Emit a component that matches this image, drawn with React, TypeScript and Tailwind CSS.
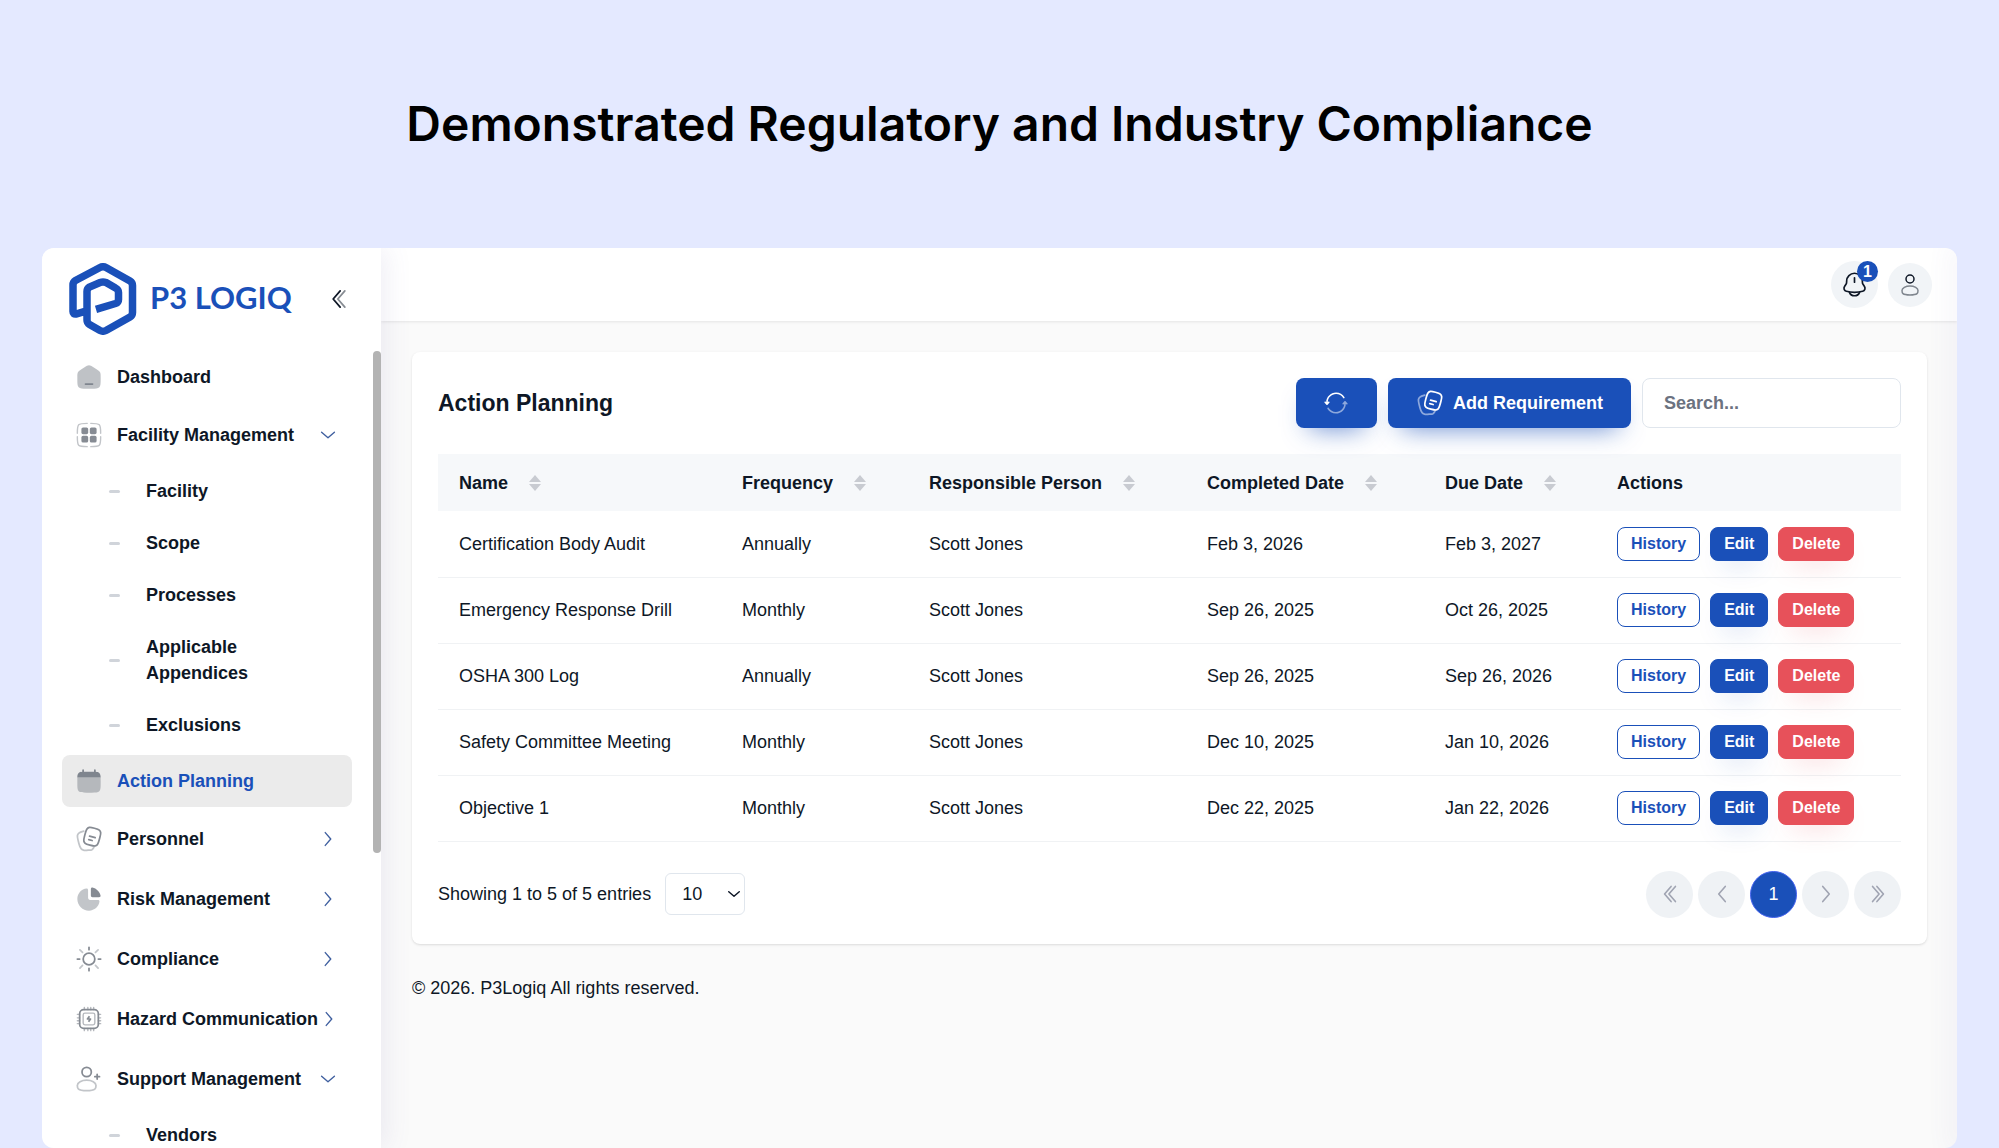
import React, { useState } from 'react';

const brandFont = 'font-[Lato,sans-serif]';

interface IconProps {
  className?: string;
}

const DashboardIcon: React.FC<IconProps> = ({ className }) => (
  <svg className={className} viewBox="0 0 24 24" fill="none" aria-hidden="true">
    <path
      opacity="0.5"
      d="M2 12.2039C2 9.91549 2 8.77128 2.5192 7.82274C3.0384 6.87421 3.98695 6.28551 5.88403 5.10813L7.88403 3.86687C9.88939 2.62229 10.8921 2 12 2C13.1079 2 14.1106 2.62229 16.116 3.86687L18.116 5.10812C20.0131 6.28551 20.9616 6.87421 21.4808 7.82274C22 8.77128 22 9.91549 22 12.2039V13.725C22 17.6258 22 19.5763 20.8284 20.7881C19.6569 22 17.7712 22 14 22H10C6.22876 22 4.34315 22 3.17157 20.7881C2 19.5763 2 17.6258 2 13.725V12.2039Z"
      fill="currentColor"
    />
    <path d="M9 18H15" stroke="currentColor" strokeWidth="1.5" strokeLinecap="round" />
  </svg>
);

const FacilityIcon: React.FC<IconProps> = ({ className }) => (
  <svg className={className} viewBox="0 0 24 24" fill="none" aria-hidden="true">
    <g fill="currentColor">
      <rect x="5.5" y="5.5" width="5.8" height="5.8" rx="1.4" />
      <rect x="12.7" y="5.5" width="5.8" height="5.8" rx="1.4" />
      <rect x="5.5" y="12.7" width="5.8" height="5.8" rx="1.4" />
      <rect x="12.7" y="12.7" width="5.8" height="5.8" rx="1.4" />
    </g>
    <g opacity="0.5" stroke="currentColor" strokeWidth="1.2" strokeLinecap="round">
      <path d="M22 13.5C22 17.771 22 19.657 20.828 20.828C19.657 22 17.771 22 13.5 22" />
      <path d="M10.5 22C6.229 22 4.343 22 3.172 20.828C2 19.657 2 17.771 2 13.5" />
      <path d="M10.5 2C6.229 2 4.343 2 3.172 3.172C2 4.343 2 6.229 2 10.5" />
      <path d="M13.5 2C17.771 2 19.657 2 20.828 3.172C22 4.343 22 6.229 22 10.5" />
    </g>
  </svg>
);

const CalendarIcon: React.FC<IconProps> = ({ className }) => (
  <svg className={className} viewBox="0 0 24 24" fill="none" aria-hidden="true">
    <path
      d="M6.96 2C7.37 2 7.7 2.32 7.7 2.72V4.08C8.36 4.07 9.1 4.07 9.94 4.07H14.06C14.9 4.07 15.64 4.07 16.3 4.08V2.72C16.3 2.32 16.63 2 17.04 2C17.45 2 17.79 2.32 17.79 2.72V4.14C19.21 4.25 20.15 4.53 20.83 5.2C21.52 5.87 21.82 6.77 21.93 8.15L22 9H2V8.15C2.11 6.77 2.41 5.87 3.1 5.2C3.78 4.53 4.72 4.25 6.21 4.14V2.72C6.21 2.32 6.55 2 6.96 2Z"
      fill="currentColor"
    />
    <path
      opacity="0.5"
      d="M22 14V12C22 11.16 21.99 9.67 21.97 9H2.03C2.01 9.67 2.01 11.16 2.01 12V14C2.01 17.77 2.01 19.66 3.18 20.83C4.35 22 6.24 22 10 22H14C17.77 22 19.65 22 20.82 20.83C22 19.66 22 17.77 22 14Z"
      fill="currentColor"
    />
  </svg>
);

const NotesIcon: React.FC<IconProps> = ({ className }) => (
  <svg className={className} viewBox="0 0 24 24" fill="none" aria-hidden="true">
    <path
      d="M20.3116 12.6473L19.7939 14.5791C19.1895 16.8346 18.8873 17.9624 18.2021 18.6938C17.6611 19.2714 16.9604 19.6759 16.1887 19.8563C15.2115 20.0847 14.0837 19.7825 11.8281 19.1782C9.57254 18.5738 8.44476 18.2716 7.71336 17.5864C7.13574 17.0453 6.73122 16.3447 6.55086 15.5729C6.3224 14.5957 6.62459 13.4679 7.22898 11.2124L7.74661 9.28055C8.351 7.02499 8.65319 5.89721 9.33842 5.1658C9.87948 4.58818 10.5801 4.18367 11.3519 4.0033C12.3291 3.77484 13.4569 4.07704 15.7124 4.68143C17.968 5.28581 19.0958 5.58801 19.8272 6.27324C20.4048 6.81431 20.8093 7.51492 20.9897 8.28667C21.2181 9.26386 20.916 10.3917 20.3116 12.6473Z"
      transform="translate(1 -1.9)"
      stroke="currentColor"
      strokeWidth="1.5"
    />
    <path d="M12.5 9.6L17.3 10.9" stroke="currentColor" strokeWidth="1.5" strokeLinecap="round" />
    <path d="M11.8 12.5L14.7 13.3" stroke="currentColor" strokeWidth="1.5" strokeLinecap="round" />
    <path
      opacity="0.5"
      d="M16.6 18.2C16 20 15.3 20.7 14.5 21.2C13.8 21.6 13 21.8 11.3 21.5C9.5 21.9 8.4 22 7.3 21.6C6.4 21.3 5.6 20.8 5.1 20.1C4.4 19.3 4 18.2 3.4 16L2.7 13.4C2.1 11.1 1.9 10 2.1 9C2.3 8.2 2.7 7.5 3.3 7C4.1 6.3 5.3 5.9 7.5 5.3"
      stroke="currentColor"
      strokeWidth="1.5"
      strokeLinecap="round"
    />
  </svg>
);

const PieIcon: React.FC<IconProps> = ({ className }) => (
  <svg className={className} viewBox="0 0 24 24" fill="none" aria-hidden="true">
    <path
      opacity="0.5"
      d="M10 3C10.7 3 11.2 3.5 11.2 4.3V11C11.2 12.1 11.9 12.8 13 12.8H19.7C20.5 12.8 21 13.3 21 14C20.5 18.5 16.7 22 12 22C6.5 22 2 17.5 2 12C2 7.3 5.5 3.4 10 3Z"
      fill="currentColor"
    />
    <path
      d="M13.6 3.4C13.6 2.5 14.2 1.9 15 2.1C18.4 2.9 21.1 5.6 21.9 9C22.1 9.8 21.5 10.4 20.6 10.4H15C14.2 10.4 13.6 9.8 13.6 9V3.4Z"
      fill="currentColor"
    />
  </svg>
);

const SunIcon: React.FC<IconProps> = ({ className }) => (
  <svg className={className} viewBox="0 0 24 24" fill="none" aria-hidden="true">
    <circle cx="12" cy="12" r="5" stroke="currentColor" strokeWidth="1.5" />
    <path
      d="M12 2V4M12 20V22M4 12H2M22 12H20"
      stroke="currentColor"
      strokeWidth="1.5"
      strokeLinecap="round"
    />
    <path
      opacity="0.5"
      d="M19.778 4.223L17.556 6.254M4.222 4.223L6.444 6.254M6.444 17.556L4.222 19.778M19.778 19.777L17.556 17.555"
      stroke="currentColor"
      strokeWidth="1.5"
      strokeLinecap="round"
    />
  </svg>
);

const ChipIcon: React.FC<IconProps> = ({ className }) => (
  <svg className={className} viewBox="0 0 24 24" fill="none" aria-hidden="true">
    <rect x="4" y="4" width="16" height="16" rx="3.5" stroke="currentColor" strokeWidth="1.5" />
    <rect x="7" y="7" width="10" height="10" rx="1.5" opacity="0.6" stroke="currentColor" strokeWidth="1.2" />
    <path d="M12.4 9.6L10.7 12H13.3L11.6 14.4" stroke="currentColor" strokeWidth="1.5" strokeLinejoin="round" />
    <path
      opacity="0.6"
      d="M8 4V2M11 4V2M13.5 4V2M16 4V2M8 20V22M11 20V22M13.5 20V22M16 20V22M4 8H2M4 11H2M4 13.5H2M4 16H2M20 8H22M20 11H22M20 13.5H22M20 16H22"
      stroke="currentColor"
      strokeWidth="1.2"
      strokeLinecap="round"
    />
  </svg>
);

const UserPlusIcon: React.FC<IconProps> = ({ className }) => (
  <svg className={className} viewBox="0 0 24 24" fill="none" aria-hidden="true">
    <circle cx="10" cy="6" r="4" stroke="currentColor" strokeWidth="1.5" />
    <path d="M21 10H19M19 10H17M19 10V8M19 10V12" stroke="currentColor" strokeWidth="1.5" strokeLinecap="round" />
    <path
      opacity="0.5"
      d="M18 17.5C18 19.985 18 22 10 22C2 22 2 19.985 2 17.5C2 15.015 5.582 13 10 13C14.418 13 18 15.015 18 17.5Z"
      stroke="currentColor"
      strokeWidth="1.5"
    />
  </svg>
);

const UserIcon: React.FC<IconProps> = ({ className }) => (
  <svg className={className} viewBox="0 0 24 24" fill="none" aria-hidden="true">
    <circle cx="12" cy="6" r="4" stroke="currentColor" strokeWidth="1.5" />
    <path
      opacity="0.5"
      d="M20 17.5C20 19.985 20 22 12 22C4 22 4 19.985 4 17.5C4 15.015 7.582 13 12 13C16.418 13 20 15.015 20 17.5Z"
      stroke="currentColor"
      strokeWidth="1.5"
    />
  </svg>
);

const BellIcon: React.FC<IconProps> = ({ className }) => (
  <svg className={className} viewBox="0 0 24 24" fill="none" aria-hidden="true">
    <path
      d="M19.0001 9.7041V9C19.0001 5.13401 15.8661 2 12.0001 2C8.13407 2 5.00006 5.13401 5.00006 9V9.7041C5.00006 10.5491 4.74995 11.3752 4.28123 12.0783L3.13263 13.8012C2.08349 15.3749 2.88442 17.5139 4.70913 18.0116C9.48258 19.3134 14.5175 19.3134 19.291 18.0116C21.1157 17.5139 21.9166 15.3749 20.8675 13.8012L19.7189 12.0783C19.2502 11.3752 19.0001 10.5491 19.0001 9.7041Z"
      stroke="currentColor"
      strokeWidth="1.5"
    />
    <path
      d="M7.5 19C8.15503 20.7478 9.92246 22 12 22C14.0775 22 15.845 20.7478 16.5 19"
      stroke="currentColor"
      strokeWidth="1.5"
      strokeLinecap="round"
    />
    <path d="M12 6V10" stroke="currentColor" strokeWidth="1.5" strokeLinecap="round" />
  </svg>
);

const RefreshIcon: React.FC<IconProps> = ({ className }) => (
  <svg className={className} viewBox="0 0 24 24" fill="none" aria-hidden="true">
    <path
      d="M12.0789 3V2.25V3ZM3.67981 11.3333H2.92981H3.67981ZM3.67981 13L3.15157 13.5324C3.44398 13.8225 3.91565 13.8225 4.20805 13.5324L3.67981 13ZM5.88787 11.8656C6.18191 11.5738 6.18377 11.0989 5.89203 10.8049C5.60029 10.5109 5.12542 10.509 4.83138 10.8007L5.88787 11.8656ZM2.52824 10.8007C2.2342 10.509 1.75933 10.5109 1.46759 10.8049C1.17585 11.0989 1.17772 11.5738 1.47176 11.8656L2.52824 10.8007ZM18.6156 7.39279C18.8325 7.74565 19.2944 7.85585 19.6473 7.63892C20.0001 7.42199 20.1103 6.96007 19.8934 6.60721L18.6156 7.39279ZM12.0789 2.25C7.03155 2.25 2.92981 6.3112 2.92981 11.3333H4.42981C4.42981 7.15072 7.84884 3.75 12.0789 3.75V2.25ZM2.92981 11.3333L2.92981 13H4.42981L4.42981 11.3333H2.92981ZM4.20805 13.5324L5.88787 11.8656L4.83138 10.8007L3.15157 12.4676L4.20805 13.5324ZM4.20805 12.4676L2.52824 10.8007L1.47176 11.8656L3.15157 13.5324L4.20805 12.4676ZM19.8934 6.60721C18.287 3.99427 15.3873 2.25 12.0789 2.25V3.75C14.8484 3.75 17.2727 5.20845 18.6156 7.39279L19.8934 6.60721Z"
      fill="currentColor"
    />
    <path
      opacity="0.5"
      d="M11.8825 21V21.75V21ZM20.3137 12.6667H21.0637H20.3137ZM20.3137 11L20.8409 10.4666C20.5487 10.1778 20.0786 10.1778 19.7864 10.4666L20.3137 11ZM18.1002 12.1333C17.8056 12.4244 17.8028 12.8993 18.094 13.1939C18.3852 13.4885 18.86 13.4913 19.1546 13.2001L18.1002 12.1333ZM21.4727 13.2001C21.7673 13.4913 22.2421 13.4885 22.5333 13.1939C22.8245 12.8993 22.8217 12.4244 22.5271 12.1332L21.4727 13.2001ZM5.31769 16.6061C5.10016 16.2536 4.63806 16.1442 4.28557 16.3618C3.93307 16.5793 3.82366 17.0414 4.0412 17.3939L5.31769 16.6061ZM11.8825 21.75C16.9448 21.75 21.0637 17.6915 21.0637 12.6667H19.5637C19.5637 16.8466 16.133 20.25 11.8825 20.25V21.75ZM21.0637 12.6667V11H19.5637V12.6667H21.0637ZM19.7864 10.4666L18.1002 12.1333L19.1546 13.2001L20.8409 11.5334L19.7864 10.4666ZM19.7864 11.5334L21.4727 13.2001L22.5271 12.1332L20.8409 10.4666L19.7864 11.5334ZM4.0412 17.3939C5.65381 20.0069 8.56379 21.75 11.8825 21.75V20.25C9.09999 20.25 6.6656 18.7903 5.31769 16.6061L4.0412 17.3939Z"
      fill="currentColor"
    />
  </svg>
);

const CollapseIcon: React.FC<IconProps> = ({ className }) => (
  <svg className={className} viewBox="0 0 24 24" fill="none" aria-hidden="true">
    <path d="M13 19L7 12L13 5" stroke="currentColor" strokeWidth="1.5" strokeLinecap="round" strokeLinejoin="round" />
    <path opacity="0.5" d="M17 19L11 12L17 5" stroke="currentColor" strokeWidth="1.5" strokeLinecap="round" strokeLinejoin="round" />
  </svg>
);

interface ChevronProps extends IconProps {
  d: string;
  width?: number;
}

const Chevron: React.FC<ChevronProps> = ({ d, width = 1.5, className }) => (
  <svg className={className} viewBox="0 0 24 24" fill="none" aria-hidden="true">
    <path d={d} stroke="currentColor" strokeWidth={width} strokeLinecap="round" strokeLinejoin="round" />
  </svg>
);

const CHEVRON_DOWN = 'M19 9L12 15L5 9';
const CHEVRON_RIGHT = 'M9 5L15 12L9 19';

const Logo: React.FC<IconProps> = ({ className }) => (
  <svg className={className} viewBox="0 0 68 72" fill="none" aria-hidden="true">
    <path
      d="M17.5 47.8L7 51Q4 51.5 4 48.5V22Q4 19 6.5 17.5L31 4.5Q34 3 37 4.5L61 18Q63.5 19.5 63.5 22.5V49.5Q63.5 52.5 61 54L37 67.5Q34 69 31 67.5L20.5 61.5Q18 60 18 57V28.5Q18 25.5 20.5 24L31 19.5Q34 18.5 37 19.5L46.5 25Q49.5 26.5 49.5 29.5V36.5Q49.5 39.5 46.5 40.5L27 46.3"
      stroke="#1a50b9"
      strokeWidth="7.5"
    />
  </svg>
);

interface NavItem {
  label: string;
  icon: React.FC<IconProps>;
  state?: 'open' | 'closed';
  active?: boolean;
  children?: string[];
}

const navItems: NavItem[] = [
  { label: 'Dashboard', icon: DashboardIcon },
  {
    label: 'Facility Management',
    icon: FacilityIcon,
    state: 'open',
    children: ['Facility', 'Scope', 'Processes', 'Applicable Appendices', 'Exclusions'],
  },
  { label: 'Action Planning', icon: CalendarIcon, active: true },
  { label: 'Personnel', icon: NotesIcon, state: 'closed' },
  { label: 'Risk Management', icon: PieIcon, state: 'closed' },
  { label: 'Compliance', icon: SunIcon, state: 'closed' },
  { label: 'Hazard Communication', icon: ChipIcon, state: 'closed' },
  { label: 'Support Management', icon: UserPlusIcon, state: 'open', children: ['Vendors'] },
];

const columns = [
  { label: 'Name', width: 'w-[283px]', sortable: true },
  { label: 'Frequency', width: 'w-[187px]', sortable: true },
  { label: 'Responsible Person', width: 'w-[278px]', sortable: true },
  { label: 'Completed Date', width: 'w-[238px]', sortable: true },
  { label: 'Due Date', width: 'w-[172px]', sortable: true },
  { label: 'Actions', width: '', sortable: false },
];

const requirements = [
  { name: 'Certification Body Audit', frequency: 'Annually', person: 'Scott Jones', completed: 'Feb 3, 2026', due: 'Feb 3, 2027' },
  { name: 'Emergency Response Drill', frequency: 'Monthly', person: 'Scott Jones', completed: 'Sep 26, 2025', due: 'Oct 26, 2025' },
  { name: 'OSHA 300 Log', frequency: 'Annually', person: 'Scott Jones', completed: 'Sep 26, 2025', due: 'Sep 26, 2026' },
  { name: 'Safety Committee Meeting', frequency: 'Monthly', person: 'Scott Jones', completed: 'Dec 10, 2025', due: 'Jan 10, 2026' },
  { name: 'Objective 1', frequency: 'Monthly', person: 'Scott Jones', completed: 'Dec 22, 2025', due: 'Jan 22, 2026' },
];

const Sidebar: React.FC = () => (
  <aside className="z-10 flex w-[339px] shrink-0 flex-col bg-white shadow-[5px_0_25px_0_rgba(94,92,154,0.1)]">
    <div className="flex h-[103px] shrink-0 items-center justify-between pb-0.5 pl-[27px] pr-7">
      <a href="#" className="flex items-center gap-[13px] text-[#1a50b9]">
        <Logo className="h-[72px] w-[68px]" />
        <span className={`pb-1 text-[31px] leading-9 font-bold ${brandFont}`}>P3 LOGIQ</span>
      </a>
      <button type="button" aria-label="Collapse sidebar">
        <CollapseIcon className="size-7" />
      </button>
    </div>

    {/* menu */}
    <div className="flex min-h-0 flex-1 overflow-hidden">
      <nav className="min-w-0 flex-1 pl-5 pr-[21px]">
        <ul className="flex flex-col gap-1 font-bold">
          {navItems.map(item => (
            <li key={item.label}>
              {item.state ? (
                <button type="button" className="flex h-14 w-full items-center justify-between px-[13px]">
                  <span className="flex items-center gap-3.5 whitespace-nowrap">
                    <item.icon className="size-7 shrink-0 text-[#868b93]" />
                    {item.label}
                  </span>
                  <Chevron
                    d={item.state === 'open' ? CHEVRON_DOWN : CHEVRON_RIGHT}
                    className="size-[22px] shrink-0 text-[#3f5f9f]"
                  />
                </button>
              ) : (
                <a
                  href="#"
                  className={`flex h-[52px] items-center gap-3.5 rounded-lg px-[13px] ${item.active ? 'bg-[#ebebeb] text-[#1a50b9]' : ''}`}
                >
                  <item.icon className="size-7 shrink-0 text-[#7f858e]" />
                  {item.label}
                </a>
              )}
              {item.children && (
                <ul className="mt-0.5">
                  {item.children.map(child => (
                    <li key={child}>
                      <a href="#" className="flex items-center gap-[26px] py-[13px] pl-[47px] pr-6">
                        <span className="h-[3px] w-[11px] shrink-0 rounded-sm bg-[#d0d4da]" />
                        {child}
                      </a>
                    </li>
                  ))}
                </ul>
              )}
            </li>
          ))}
        </ul>
      </nav>
      <div className="h-[502px] w-2 shrink-0 rounded-full bg-[#b3b3b3]" />
    </div>
  </aside>
);

const Topbar: React.FC = () => (
  <header className="flex h-[73px] shrink-0 items-center justify-end gap-2.5 bg-white pr-[25px] shadow-[0_1px_3px_rgba(0,0,0,0.09)]">
    <button
      type="button"
      aria-label="Notifications"
      className="relative flex size-[47px] items-center justify-center rounded-full bg-[#f1f4f7]"
    >
      <BellIcon className="size-[27px]" />
      <span className="absolute right-0 top-0 flex size-[21px] items-center justify-center rounded-full bg-[#1a50b9] text-base leading-5 font-bold text-white">
        1
      </span>
    </button>
    <button type="button" aria-label="Account" className="flex size-11 items-center justify-center rounded-full bg-[#f1f4f7]">
      <UserIcon className="size-6" />
    </button>
  </header>
);

const SortIcon: React.FC = () => (
  <svg className="h-4 w-3 text-[#c8cbd1]" viewBox="0 0 12 16" fill="currentColor" aria-hidden="true">
    <path d="M6 0L12 7H0Z" />
    <path d="M6 16L12 9H0Z" />
  </svg>
);

const RequirementsTable: React.FC = () => (
  <table className="w-full table-fixed border-collapse text-left">
    <thead>
      <tr className="h-[57px] bg-[#f6f8fa]">
        {columns.map(col => (
          <th key={col.label} scope="col" className={`px-[21px] font-bold whitespace-nowrap ${col.width}`}>
            {col.sortable ? (
              <button type="button" className="flex items-center gap-[21px]">
                {col.label}
                <SortIcon />
              </button>
            ) : (
              col.label
            )}
          </th>
        ))}
      </tr>
    </thead>
    <tbody>
      {requirements.map(row => (
        <tr key={row.name} className="h-[66px] border-b border-[#f0f2f4]">
          <td className="px-[21px]">{row.name}</td>
          <td className="px-[21px]">{row.frequency}</td>
          <td className="px-[21px]">{row.person}</td>
          <td className="px-[21px]">{row.completed}</td>
          <td className="px-[21px]">{row.due}</td>
          <td className="px-[21px]">
            <div className="flex gap-2.5 text-base font-bold">
              <button type="button" className="h-[34px] rounded-lg border border-[#1a50b9] px-[13px] leading-6 text-[#1a50b9]">
                History
              </button>
              <button
                type="button"
                className="h-[34px] rounded-lg border border-[#1a50b9] bg-[#1a50b9] px-[13px] leading-6 text-white shadow-[0_13px_26px_-13px_rgba(26,80,185,0.35)]"
              >
                Edit
              </button>
              <button
                type="button"
                className="h-[34px] rounded-lg border border-[#e7515a] bg-[#e7515a] px-[13px] leading-6 text-white shadow-[0_13px_26px_-13px_rgba(231,81,90,0.4)]"
              >
                Delete
              </button>
            </div>
          </td>
        </tr>
      ))}
    </tbody>
  </table>
);

const pageLinks = [
  { label: 'First page', paths: ['M13 19L7 12L13 5', 'M17 19L11 12L17 5'] },
  { label: 'Previous page', paths: ['M15 5L9 12L15 19'] },
  { label: '1', paths: [] },
  { label: 'Next page', paths: ['M9 5L15 12L9 19'] },
  { label: 'Last page', paths: ['M11 19L17 12L11 5', 'M7 19L13 12L7 5'] },
];

const Pagination: React.FC = () => (
  <nav aria-label="Pagination" className="flex gap-[5px]">
    {pageLinks.map(link =>
      link.paths.length ? (
        <button
          key={link.label}
          type="button"
          aria-label={link.label}
          className="flex size-[47px] items-center justify-center rounded-full bg-[#eff2f5] text-[#a0a4b2]"
        >
          <svg className="size-[26px]" viewBox="0 0 24 24" fill="none" aria-hidden="true">
            {link.paths.map(d => (
              <path key={d} d={d} stroke="currentColor" strokeWidth="1.5" strokeLinecap="round" strokeLinejoin="round" />
            ))}
          </svg>
        </button>
      ) : (
        <button
          key={link.label}
          type="button"
          aria-current="page"
          className="flex size-[47px] items-center justify-center rounded-full border border-[#4361ee] bg-[#1a50b9] text-white"
        >
          {link.label}
        </button>
      )
    )}
  </nav>
);

const ActionPlanningCard: React.FC = () => {
  const [search, setSearch] = useState('');
  const [pageSize, setPageSize] = useState('10');

  return (
    <section className="rounded-lg bg-white p-[26px] shadow-sm">
      {/* title + actions */}
      <div className="mb-[26px] flex items-center justify-between">
        <h2 className="text-[23px] leading-7 font-bold">Action Planning</h2>
        <div className="flex items-center gap-[11px]">
          <button
            type="button"
            aria-label="Refresh"
            className="flex h-[50px] w-[81px] items-center justify-center rounded-lg bg-[#1a50b9] text-white shadow-[0_13px_26px_-13px_rgba(26,80,185,0.7)]"
          >
            <RefreshIcon className="size-[26px]" />
          </button>
          <button
            type="button"
            className="flex h-[50px] items-center gap-[9px] rounded-lg bg-[#1a50b9] px-7 font-bold text-white shadow-[0_13px_26px_-13px_rgba(26,80,185,0.7)]"
          >
            <NotesIcon className="size-7" />
            Add Requirement
          </button>
          <input
            type="text"
            aria-label="Search"
            placeholder="Search..."
            value={search}
            onChange={e => setSearch(e.target.value)}
            className="h-[50px] w-[259px] rounded-lg border border-[#e0e6ed] bg-white px-[21px] font-bold placeholder:text-[#6b7280]"
          />
        </div>
      </div>

      <RequirementsTable />

      {/* table footer */}
      <div className="mt-[29px] flex items-center justify-between">
        <div className="flex items-center gap-3.5">
          <span>Showing 1 to 5 of 5 entries</span>
          <div className="relative">
            <select
              aria-label="Entries per page"
              value={pageSize}
              onChange={e => setPageSize(e.target.value)}
              className="h-[42px] w-20 appearance-none rounded-md border border-[#e0e6ed] bg-white pl-4"
            >
              <option>10</option>
              <option>20</option>
              <option>50</option>
            </select>
            <Chevron d={CHEVRON_DOWN} width={2} className="pointer-events-none absolute right-[2px] top-3 size-[18px]" />
          </div>
        </div>
        <Pagination />
      </div>
    </section>
  );
};

export default function App() {
  return (
    <div className="flex h-screen flex-col overflow-hidden bg-[#e4e9ff] font-['Liberation_Sans',Arial,sans-serif] text-lg leading-[26px] text-[#0e1726]">
      <div className="flex h-[248px] shrink-0 items-center justify-center">
        <h1 className="font-[Inter,sans-serif] text-5xl font-semibold text-black">
          Demonstrated Regulatory and Industry Compliance
        </h1>
      </div>

      <div className="mx-[42px] flex min-h-0 flex-1 overflow-hidden rounded-xl bg-[#fafafa]">
        <Sidebar />
        <div className="flex min-w-0 flex-1 flex-col">
          <Topbar />
          <main className="flex-1 pl-[31px] pt-[31px] pr-[30px]">
            <ActionPlanningCard />
            <p className="mt-[31px]">© 2026. P3Logiq All rights reserved.</p>
          </main>
        </div>
        <div className="z-10 w-0 shadow-[0_0_25px_5px_rgba(94,92,154,0.1)]" />
      </div>
    </div>
  );
}
